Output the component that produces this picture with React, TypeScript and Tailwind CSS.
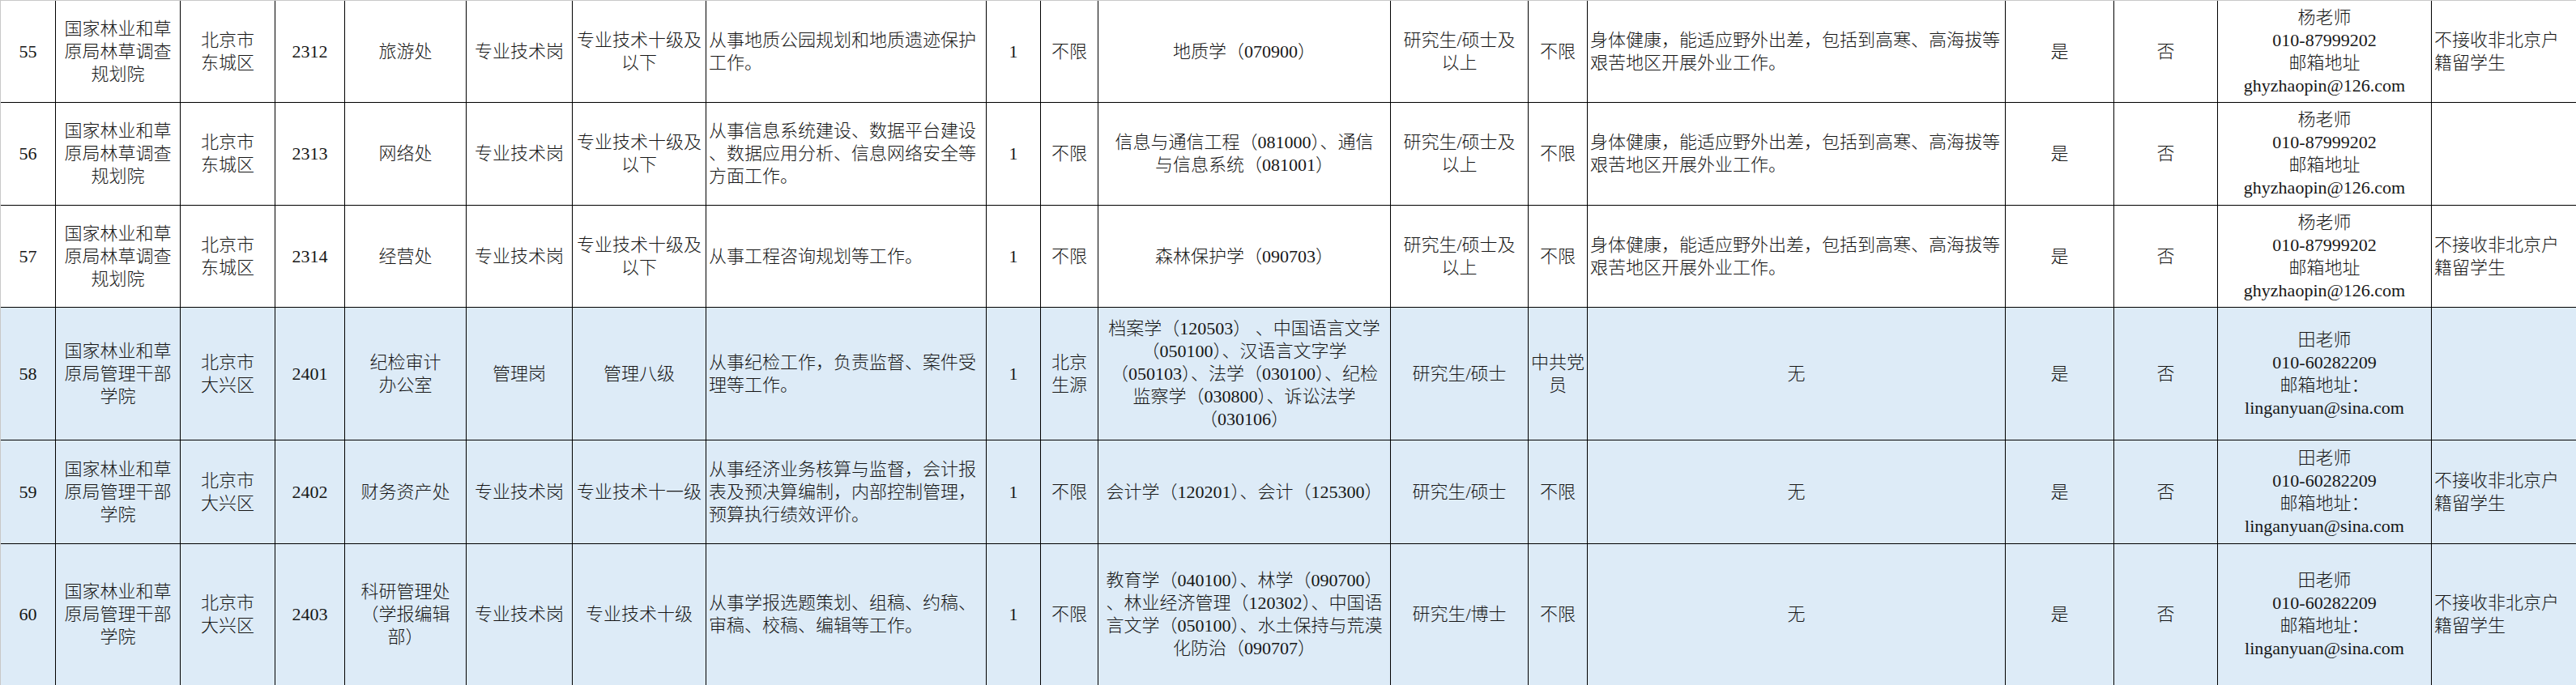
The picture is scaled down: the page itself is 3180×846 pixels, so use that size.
import React from "react";

type Row = { cells: string[][]; blue?: boolean };

const YANG = ["杨老师", "010-87999202", "邮箱地址", "ghyzhaopin@126.com"];
const TIAN = ["田老师", "010-60282209", "邮箱地址：", "linganyuan@sina.com"];
const NOTE = ["不接收非北京户", "籍留学生"];
const FIELD = ["身体健康，能适应野外出差，包括到高寒、高海拔等", "艰苦地区开展外业工作。"];
const ORG1 = ["国家林业和草", "原局林草调查", "规划院"];
const ORG2 = ["国家林业和草", "原局管理干部", "学院"];

const rows: Row[] = [
  {
    cells: [
      ["55"], ORG1, ["北京市", "东城区"], ["2312"], ["旅游处"], ["专业技术岗"], ["专业技术十级及", "以下"],
      ["从事地质公园规划和地质遗迹保护", "工作。"], ["1"], ["不限"], ["地质学（070900）"],
      ["研究生/硕士及", "以上"], ["不限"], FIELD, ["是"], ["否"], YANG, NOTE,
    ],
  },
  {
    cells: [
      ["56"], ORG1, ["北京市", "东城区"], ["2313"], ["网络处"], ["专业技术岗"], ["专业技术十级及", "以下"],
      ["从事信息系统建设、数据平台建设", "、数据应用分析、信息网络安全等", "方面工作。"], ["1"], ["不限"],
      ["信息与通信工程（081000）、通信", "与信息系统（081001）"],
      ["研究生/硕士及", "以上"], ["不限"], FIELD, ["是"], ["否"], YANG, [],
    ],
  },
  {
    cells: [
      ["57"], ORG1, ["北京市", "东城区"], ["2314"], ["经营处"], ["专业技术岗"], ["专业技术十级及", "以下"],
      ["从事工程咨询规划等工作。"], ["1"], ["不限"], ["森林保护学（090703）"],
      ["研究生/硕士及", "以上"], ["不限"], FIELD, ["是"], ["否"], YANG, NOTE,
    ],
  },
  {
    blue: true,
    cells: [
      ["58"], ORG2, ["北京市", "大兴区"], ["2401"], ["纪检审计", "办公室"], ["管理岗"], ["管理八级"],
      ["从事纪检工作，负责监督、案件受", "理等工作。"], ["1"], ["北京", "生源"],
      ["档案学（120503） 、中国语言文学", "（050100）、汉语言文字学", "（050103）、法学（030100）、纪检", "监察学（030800）、诉讼法学", "（030106）"],
      ["研究生/硕士"], ["中共党", "员"], ["无"], ["是"], ["否"], TIAN, [],
    ],
  },
  {
    blue: true,
    cells: [
      ["59"], ORG2, ["北京市", "大兴区"], ["2402"], ["财务资产处"], ["专业技术岗"], ["专业技术十一级"],
      ["从事经济业务核算与监督，会计报", "表及预决算编制，内部控制管理，", "预算执行绩效评价。"], ["1"], ["不限"],
      ["会计学（120201）、会计（125300）"],
      ["研究生/硕士"], ["不限"], ["无"], ["是"], ["否"], TIAN, NOTE,
    ],
  },
  {
    blue: true,
    cells: [
      ["60"], ORG2, ["北京市", "大兴区"], ["2403"], ["科研管理处", "（学报编辑", "部）"], ["专业技术岗"], ["专业技术十级"],
      ["从事学报选题策划、组稿、约稿、", "审稿、校稿、编辑等工作。"], ["1"], ["不限"],
      ["教育学（040100）、林学（090700）", "、林业经济管理（120302）、中国语", "言文学（050100）、水土保持与荒漠", "化防治（090707）"],
      ["研究生/博士"], ["不限"], ["无"], ["是"], ["否"], TIAN, NOTE,
    ],
  },
];

// duty, field requirements and remarks read left to right
function isLeft(col: number, lines: string[]) {
  if (col === 7 || col === 17) return true;
  if (col === 13) return lines[0] !== "无";
  return false;
}

export default function App() {
  return (
    <div className="w-[3180px] h-[846px] bg-white overflow-hidden">
      <div className="grid grid-cols-[68px_154px_117px_86px_150px_131px_165px_346px_67px_71px_361px_170px_73px_516px_134px_128px_264px_179px] grid-rows-[126px_127px_126px_164px_128px_175px] border-t border-l border-[#c8c8c8] font-['Liberation_Serif','Noto_Sans_CJK_SC',serif] font-light text-[22px] leading-[28px] text-[#161616]">
        {rows.map((row, r) =>
          row.cells.map((lines, c) => (
            <div
              key={`${r}-${c}`}
              className={`flex flex-col justify-center whitespace-nowrap border-b border-black ${
                c < 17 ? "border-r" : ""
              } ${row.blue ? "bg-[#ddebf7]" : "bg-white"} ${
                isLeft(c, lines) ? "items-start text-left px-[3px]" : "items-center text-center"
              }`}
            >
              {lines.map((t, i) => (
                <span key={i}>{t}</span>
              ))}
            </div>
          ))
        )}
      </div>
    </div>
  );
}
